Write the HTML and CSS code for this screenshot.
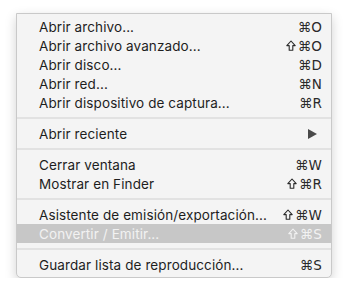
FILE: index.html
```html
<!DOCTYPE html>
<html lang="es">

<head>
	<meta charset="UTF-8" />
	<meta name="viewport" content="width=device-width, initial-scale=1.0" />
	<title>Menú Archivo</title>
	<link rel="stylesheet" href="styles.css">
</head>

<body>

	<div class="menu">
		<div class="item"><span>Abrir archivo...</span><span class="key">⌘O</span></div>
		<div class="item"><span>Abrir archivo avanzado...</span>
			<span class="key"><svg class="shift" width="10" height="11" viewBox="0 0 10 11"><path d="M5 1 L9.2 5.6 H6.8 V10.3 H3.2 V5.6 H0.8 Z" /></svg>⌘O</span>
		</div>
		<div class="item"><span>Abrir disco...</span><span class="key">⌘D</span></div>
		<div class="item"><span>Abrir red...</span><span class="key">⌘N</span></div>
		<div class="item"><span>Abrir dispositivo de captura...</span><span class="key">⌘R</span></div>

		<div class="sep"></div>

		<div class="item"><span>Abrir reciente</span>
			<svg class="arrow" width="9" height="10" viewBox="0 0 9 10">
				<path d="M0 0 L9 5 L0 10 Z" fill="#4a4a4a" />
			</svg>
		</div>

		<div class="sep"></div>

		<div class="item"><span>Cerrar ventana</span><span class="key">⌘W</span></div>
		<div class="item"><span>Mostrar en Finder</span>
			<span class="key"><svg class="shift" width="10" height="11" viewBox="0 0 10 11"><path d="M5 1 L9.2 5.6 H6.8 V10.3 H3.2 V5.6 H0.8 Z" /></svg>⌘R</span>
		</div>

		<div class="sep"></div>

		<div class="item"><span>Asistente de emisión/exportación...</span>
			<span class="key"><svg class="shift" width="10" height="11" viewBox="0 0 10 11"><path d="M5 1 L9.2 5.6 H6.8 V10.3 H3.2 V5.6 H0.8 Z" /></svg>⌘W</span>
		</div>
		<div class="item active"><span>Convertir / Emitir...</span>
			<span class="key"><svg class="shift" width="10" height="11" viewBox="0 0 10 11"><path d="M5 1 L9.2 5.6 H6.8 V10.3 H3.2 V5.6 H0.8 Z" /></svg>⌘S</span>
		</div>

		<div class="sep"></div>

		<div class="item"><span>Guardar lista de reproducción...</span><span class="key">⌘S</span></div>
	</div>

</body>

</html>
```

FILE: styles.css
```css
* {
	box-sizing: border-box;
	margin: 0;
	padding: 0;
}

body {
	font-family: 'Inter', 'DejaVu Sans', sans-serif;
	background: #ffffff;
	padding: 13px 17px 0 16px;
}

.menu {
	width: 316px;
	background: #f4f4f4;
	border: 1px solid #c9c9c9;
	border-radius: 0 0 5px 5px;
	box-shadow: 0 4px 12px rgba(0, 0, 0, 0.18);
	padding: 3px 0 3px 0;
}

.item {
	height: 19px;
	display: flex;
	align-items: center;
	justify-content: space-between;
	padding: 0 9px 0 22px;
	font-size: 13.5px;
	color: #1e1e1e;
	letter-spacing: 0.1px;
}

.item .key {
	display: flex;
	align-items: center;
	font-family: 'DejaVu Sans', sans-serif;
	font-size: 13.5px;
	color: #2a2a2a;
}

.shift {
	margin-right: 2px;
	fill: none;
	stroke: #2a2a2a;
	stroke-width: 1.1;
	stroke-linejoin: round;
}

.item.active {
	background: #c7c7c7;
	color: #f2f2f2;
}

.item.active .key {
	color: #f2f2f2;
}

.item.active .shift {
	stroke: #f2f2f2;
}

.arrow {
	margin-right: 5px;
}

.sep {
	height: 2px;
	background: #e2e2e2;
	margin: 5px 0;
}
```
